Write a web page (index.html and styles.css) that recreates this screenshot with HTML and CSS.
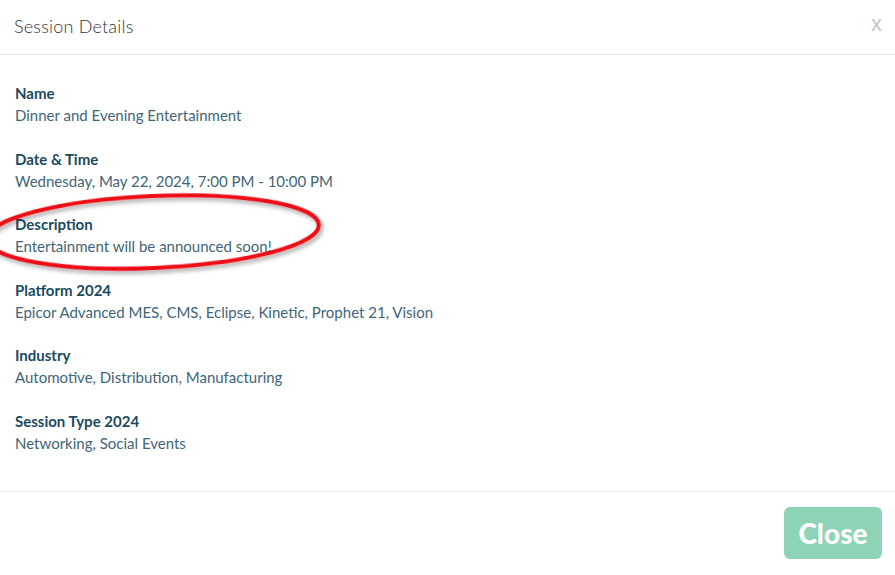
FILE: index.html
```html
<!DOCTYPE html>
<html>
<head>
<meta charset="utf-8">
<link rel="stylesheet" href="styles.css">
</head>
<body>
<div class="modal">
  <div class="modal-header">
    <h4 class="modal-title">Session Details</h4>
    <span class="close-x">x</span>
  </div>
  <div class="modal-body">
    <div class="field"><div class="label">Name</div><div class="value">Dinner and Evening Entertainment</div></div>
    <div class="field"><div class="label">Date &amp; Time</div><div class="value">Wednesday, May 22, 2024, 7:00 PM - 10:00 PM</div></div>
    <div class="field"><div class="label">Description</div><div class="value">Entertainment will be announced soon!</div></div>
    <div class="field"><div class="label">Platform 2024</div><div class="value">Epicor Advanced MES, CMS, Eclipse, Kinetic, Prophet 21, Vision</div></div>
    <div class="field"><div class="label">Industry</div><div class="value">Automotive, Distribution, Manufacturing</div></div>
    <div class="field"><div class="label">Session Type 2024</div><div class="value">Networking, Social Events</div></div>
  </div>
  <div class="modal-footer">
    <button class="btn-close">Close</button>
  </div>
  <svg class="annotation" width="895" height="575" viewBox="0 0 895 575">
    <defs>
      <filter id="sh" x="-20%" y="-50%" width="140%" height="200%">
        <feDropShadow dx="2" dy="3" stdDeviation="2" flood-color="#000" flood-opacity="0.35"/>
      </filter>
    </defs>
    <ellipse cx="153" cy="232" rx="166" ry="36" transform="rotate(-2.5 153 232)" fill="none" stroke="#ec1118" stroke-width="4" filter="url(#sh)"/>
  </svg>
</div>
</body>
</html>
```
FILE: styles.css
```css
html, body {
  margin: 0;
  padding: 0;
  background: #fff;
}
.modal {
  position: relative;
  width: 895px;
  height: 575px;
  display: flex;
  flex-direction: column;
  font-family: Lato, "Liberation Sans", sans-serif;
}
.modal-header {
  height: 54px;
  border-bottom: 1px solid #e5e5e5;
  display: flex;
  align-items: center;
  justify-content: space-between;
  padding: 0 13px 0 14px;
  box-sizing: content-box;
}
.modal-title {
  margin: 0;
  font-size: 18px;
  font-weight: 300;
  color: #333;
  letter-spacing: 0.2px;
  padding-bottom: 3px;
}
.close-x {
  color: #c4c4c4;
  font-size: 22px;
  font-weight: 300;
  font-family: "Liberation Sans", sans-serif;
  padding-bottom: 6px;
}
.modal-body {
  flex: 1;
  padding: 27px 15px 0 15px;
}
.field {
  margin-bottom: 21.6px;
}
.label {
  font-size: 15px;
  line-height: 22px;
  font-weight: 700;
  color: #1b4a60;
}
.value {
  font-size: 15px;
  line-height: 22px;
  color: #3f6577;
}
.modal-footer {
  height: 84px;
  border-top: 1px solid #e5e5e5;
  display: flex;
  justify-content: flex-end;
  align-items: flex-start;
  padding: 15px 13px 0 0;
  box-sizing: border-box;
}
.btn-close {
  width: 98px;
  height: 52px;
  border: none;
  border-radius: 6px;
  background: #8fd3b6;
  color: #fff;
  font-family: Lato, "Liberation Sans", sans-serif;
  font-weight: 900;
  font-size: 28px;
  padding: 0;
}
.annotation {
  position: absolute;
  left: 0;
  top: 0;
  pointer-events: none;
}
```
